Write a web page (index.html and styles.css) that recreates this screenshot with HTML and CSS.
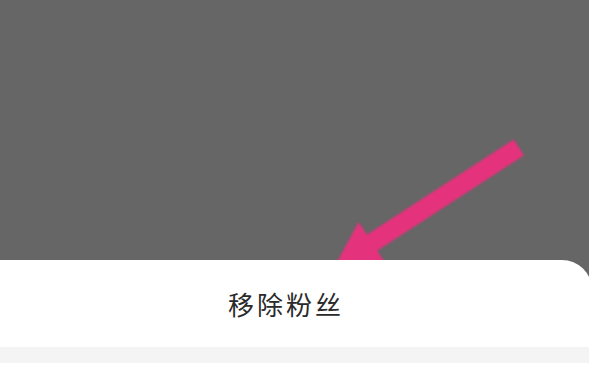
FILE: index.html
```html
<!DOCTYPE html>
<html lang="zh">
<head>
<meta charset="utf-8">
<title>移除粉丝</title>
<link rel="stylesheet" href="styles.css">
</head>
<body>
<div class="screen">
  <div class="backdrop">
    <svg class="arrow" width="589" height="260" viewBox="0 0 589 260" xmlns="http://www.w3.org/2000/svg">
      <defs>
        <filter id="soft" x="-10%" y="-10%" width="120%" height="120%">
          <feGaussianBlur stdDeviation="0.8"/>
        </filter>
      </defs>
      <polygon points="522.6,155.1 513.4,140.9 366.6,236.1 358.7,223.9 336,266 383.7,262.5 375.8,250.3" fill="#e5317b" stroke="#e5317b" stroke-width="2" stroke-linejoin="round" filter="url(#soft)"/>
    </svg>
  </div>
  <div class="sheet">
    <div class="sheet-item">移除粉丝</div>
    <div class="sheet-divider"></div>
    <div class="sheet-cancel"></div>
  </div>
</div>
</body>
</html>
```
FILE: styles.css
```css
html, body {
  margin: 0;
  padding: 0;
}
body {
  background: #666666;
  font-family: "Noto Sans CJK SC", "Noto Sans", sans-serif;
  width: 589px;
  height: 387px;
  overflow: hidden;
}
.screen {
  display: flex;
  flex-direction: column;
  width: 589px;
  height: 387px;
}
.backdrop {
  position: relative;
  height: 260px;
  flex: none;
}
.arrow {
  position: absolute;
  left: 0;
  top: 0;
}
.sheet {
  flex: 1;
  display: flex;
  flex-direction: column;
  background: #ffffff;
  border-top-right-radius: 30px;
  margin-right: -3px;
  margin-left: -40px;
  padding-left: 40px;
  padding-right: 3px;
}
.sheet-item {
  height: 87px;
  display: flex;
  align-items: center;
  justify-content: center;
  padding-right: 17px;
  font-size: 26px;
  letter-spacing: 3px;
  color: #2a2a2a;
  font-weight: 400;
}
.sheet-divider {
  height: 16px;
  background: #f4f4f4;
}
.sheet-cancel {
  flex: 1;
  background: #ffffff;
}
```
